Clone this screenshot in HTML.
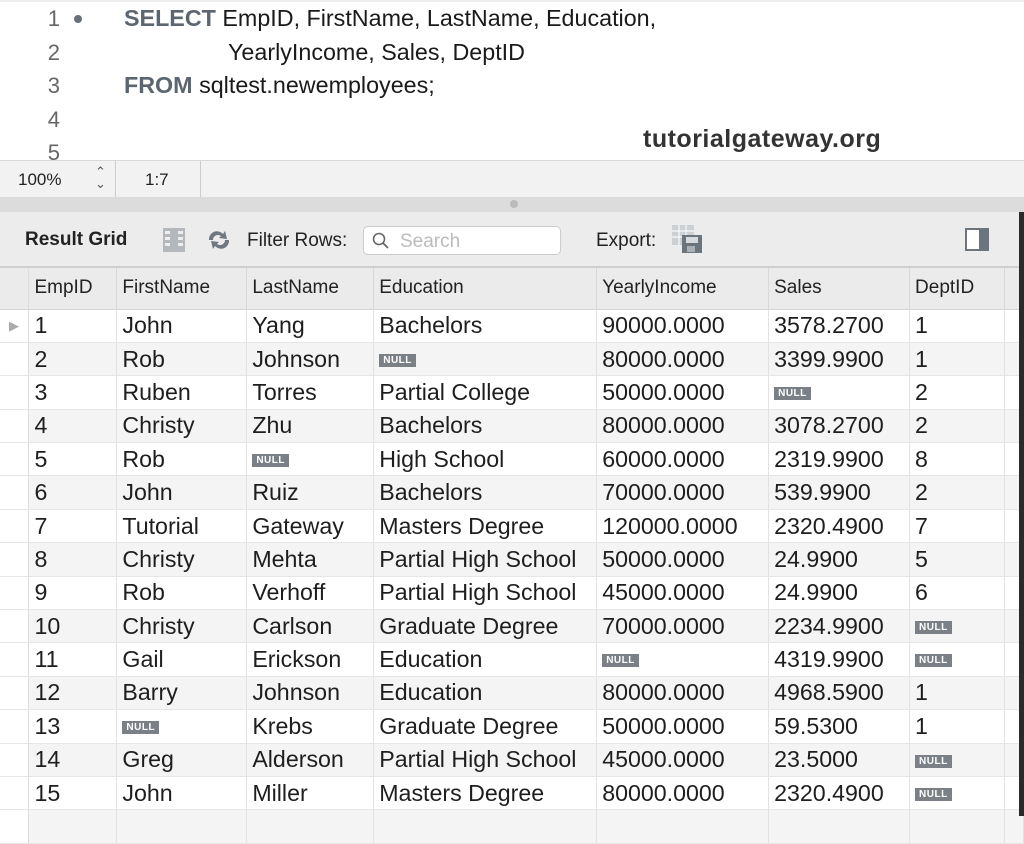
<!DOCTYPE html>
<html><head><meta charset="utf-8"><style>
*{margin:0;padding:0;box-sizing:border-box}
body{width:1024px;height:816px;overflow:hidden;background:#fff;font-family:"Liberation Sans",Arial,sans-serif;position:relative;color:#222}
.ab{position:absolute}
.ln{position:absolute;left:36px;width:24px;text-align:right;font-size:22px;color:#666}
.sql{position:absolute;font-size:23.3px;color:#1a1a1a;white-space:pre}
.kw{color:#5c6670;font-weight:bold}
table{position:absolute;left:0;top:268px;border-collapse:collapse;table-layout:fixed}
td,th{overflow:hidden;white-space:nowrap;padding-left:5px;border-right:1px solid #e2e2e2;text-align:left}
th{height:41px;background:#ebebeb;font-weight:normal;font-size:19px;color:#222;border-bottom:1px solid #d5d5d5;border-right:1px solid #d8d8d8}
td{height:33.4px;font-size:23.2px;color:#1e1e1e;border-bottom:1px solid #e6e6e6}
tr:nth-child(odd) td{background:#f4f4f4}
td:first-child,th:first-child{padding:0;background:#fff!important;border-right:1px solid #ddd}
th:first-child{background:#ebebeb!important}
.n{display:inline-block;background:#7a8086;color:#fff;font-size:10px;font-weight:bold;padding:1px 4px;vertical-align:middle;letter-spacing:.5px}
</style></head><body>
<div class="ab" style="left:0;top:0;width:1024px;height:160px;background:#fff;border-top:2px solid #eee"></div>
<div class="ln" style="top:6px">1</div><div class="ab" style="left:74px;top:15px;width:8px;height:8px;border-radius:50%;background:#687078"></div>
<div class="ln" style="top:40px">2</div>
<div class="ln" style="top:73px">3</div>
<div class="ln" style="top:107px">4</div>
<div class="ln" style="top:140px">5</div>
<div class="sql" style="left:124px;top:5px"><span class="kw">SELECT</span> EmpID, FirstName, LastName, Education,</div>
<div class="sql" style="left:228px;top:39px">YearlyIncome, Sales, DeptID</div>
<div class="sql" style="left:124px;top:72px"><span class="kw">FROM</span> sqltest.newemployees;</div>
<div class="ab" style="left:643px;top:125px;font-size:25px;font-weight:bold;color:#333;letter-spacing:0.5px">tutorialgateway.org</div>
<div class="ab" style="left:0;top:160px;width:1024px;height:37px;background:#f2f2f2;border-top:1px solid #d8d8d8"></div>
<div class="ab" style="left:18px;top:170px;font-size:17px;color:#222">100%</div>
<div class="ab" style="left:95px;top:166px;font-size:13px;color:#555;line-height:12px">&#8963;<br>&#8964;</div>
<div class="ab" style="left:115px;top:161px;width:1px;height:36px;background:#ccc"></div>
<div class="ab" style="left:145px;top:170px;font-size:17px;color:#222">1:7</div>
<div class="ab" style="left:200px;top:161px;width:1px;height:36px;background:#ccc"></div>
<div class="ab" style="left:0;top:197px;width:1024px;height:15px;background:#dcdcdc"></div>
<div class="ab" style="left:510px;top:200px;width:8px;height:8px;border-radius:50%;background:#bbb"></div>
<div class="ab" style="left:0;top:212px;width:1024px;height:56px;background:#ececec;border-bottom:2px solid #cfcfcf"></div>
<div class="ab" style="left:25px;top:229px;font-size:19px;font-weight:bold;color:#222">Result Grid</div>
<svg class="ab" style="left:163px;top:228px" width="24" height="24"><rect x="0" y="0" width="22" height="24" fill="#b4b8bc"/><g fill="#eee"><rect x="2" y="3" width="5" height="3"/><rect x="15" y="3" width="5" height="3"/><rect x="2" y="9" width="5" height="3"/><rect x="15" y="9" width="5" height="3"/><rect x="2" y="15" width="5" height="3"/><rect x="15" y="15" width="5" height="3"/></g></svg>
<svg class="ab" style="left:205px;top:228px" width="28" height="24"><path d="M4 12 A8 8 0 0 1 18 6 L20 3 L22 11 L14 10 L16 8 A5 5 0 0 0 8 12Z" fill="#6f7880"/><path d="M24 12 A8 8 0 0 1 10 18 L8 21 L6 13 L14 14 L12 16 A5 5 0 0 0 20 12Z" fill="#6f7880"/></svg>
<div class="ab" style="left:247px;top:230px;font-size:19px;color:#222">Filter Rows:</div>
<div class="ab" style="left:363px;top:226px;width:198px;height:29px;background:#fff;border:1px solid #ccc;border-radius:5px"></div>
<svg class="ab" style="left:372px;top:232px" width="18" height="18"><circle cx="7" cy="7" r="5.5" fill="none" stroke="#666" stroke-width="1.6"/><line x1="11" y1="11" x2="16" y2="16" stroke="#666" stroke-width="1.8"/></svg>
<div class="ab" style="left:400px;top:231px;font-size:19px;color:#bbb">Search</div>
<div class="ab" style="left:596px;top:230px;font-size:19px;color:#222">Export:</div>
<svg class="ab" style="left:672px;top:225px" width="32" height="30"><rect x="0" y="0" width="22" height="20" fill="#cdd0d3"/><path d="M0 6H22M0 12H22M7 0V20M14 0V20" stroke="#fff"/><rect x="10" y="10" width="20" height="18" fill="#6c757c"/><rect x="14" y="12" width="12" height="6" fill="#d8dbdd"/><rect x="15" y="21" width="8" height="6" fill="#aab0b4"/></svg>
<div class="ab" style="left:965px;top:228px;width:24px;height:23px;border:2px solid #6d757c;background:#fff"><div style="position:absolute;right:0;top:0;width:8px;height:100%;background:#6d757c"></div></div>
<table>
<colgroup><col style="width:29px"><col style="width:88px"><col style="width:130px"><col style="width:127px"><col style="width:223px"><col style="width:172px"><col style="width:141px"><col style="width:95px"><col style="width:19px"></colgroup>
<tr><th></th><th>EmpID</th><th>FirstName</th><th>LastName</th><th>Education</th><th>YearlyIncome</th><th>Sales</th><th>DeptID</th><th></th></tr>
<tr><td style="color:#aaa;font-size:13px;padding-left:9px">&#9654;</td><td>1</td><td>John</td><td>Yang</td><td>Bachelors</td><td>90000.0000</td><td>3578.2700</td><td>1</td><td></td></tr>
<tr><td></td><td>2</td><td>Rob</td><td>Johnson</td><td><span class="n">NULL</span></td><td>80000.0000</td><td>3399.9900</td><td>1</td><td></td></tr>
<tr><td></td><td>3</td><td>Ruben</td><td>Torres</td><td>Partial College</td><td>50000.0000</td><td><span class="n">NULL</span></td><td>2</td><td></td></tr>
<tr><td></td><td>4</td><td>Christy</td><td>Zhu</td><td>Bachelors</td><td>80000.0000</td><td>3078.2700</td><td>2</td><td></td></tr>
<tr><td></td><td>5</td><td>Rob</td><td><span class="n">NULL</span></td><td>High School</td><td>60000.0000</td><td>2319.9900</td><td>8</td><td></td></tr>
<tr><td></td><td>6</td><td>John</td><td>Ruiz</td><td>Bachelors</td><td>70000.0000</td><td>539.9900</td><td>2</td><td></td></tr>
<tr><td></td><td>7</td><td>Tutorial</td><td>Gateway</td><td>Masters Degree</td><td>120000.0000</td><td>2320.4900</td><td>7</td><td></td></tr>
<tr><td></td><td>8</td><td>Christy</td><td>Mehta</td><td>Partial High School</td><td>50000.0000</td><td>24.9900</td><td>5</td><td></td></tr>
<tr><td></td><td>9</td><td>Rob</td><td>Verhoff</td><td>Partial High School</td><td>45000.0000</td><td>24.9900</td><td>6</td><td></td></tr>
<tr><td></td><td>10</td><td>Christy</td><td>Carlson</td><td>Graduate Degree</td><td>70000.0000</td><td>2234.9900</td><td><span class="n">NULL</span></td><td></td></tr>
<tr><td></td><td>11</td><td>Gail</td><td>Erickson</td><td>Education</td><td><span class="n">NULL</span></td><td>4319.9900</td><td><span class="n">NULL</span></td><td></td></tr>
<tr><td></td><td>12</td><td>Barry</td><td>Johnson</td><td>Education</td><td>80000.0000</td><td>4968.5900</td><td>1</td><td></td></tr>
<tr><td></td><td>13</td><td><span class="n">NULL</span></td><td>Krebs</td><td>Graduate Degree</td><td>50000.0000</td><td>59.5300</td><td>1</td><td></td></tr>
<tr><td></td><td>14</td><td>Greg</td><td>Alderson</td><td>Partial High School</td><td>45000.0000</td><td>23.5000</td><td><span class="n">NULL</span></td><td></td></tr>
<tr><td></td><td>15</td><td>John</td><td>Miller</td><td>Masters Degree</td><td>80000.0000</td><td>2320.4900</td><td><span class="n">NULL</span></td><td></td></tr>
<tr><td></td><td></td><td></td><td></td><td></td><td></td><td></td><td></td><td></td></tr>
</table>
<div class="ab" style="left:1019px;top:212px;width:5px;height:604px;background:#2a2a2a"></div>
</body></html>
